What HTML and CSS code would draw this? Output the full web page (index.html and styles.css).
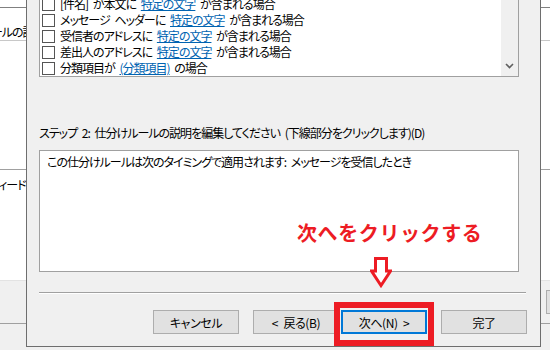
FILE: index.html
```html
<!DOCTYPE html>
<html lang="ja">
  <head>
    <meta charset="UTF-8" />
    <meta name="viewport" content="width=device-width, initial-scale=1.0" />
    <title>仕分けルール ウィザード</title>
    <link rel="stylesheet" href="styles.css">
  </head>
  <body>
    <div class="backdrop">
      <div class="bg-pane">
        <div class="bg-rule dark"></div>
        <div class="bg-text top">ールの説明</div>
        <div class="bg-rule light"></div>
        <div class="bg-spacer"></div>
        <div class="bg-rule"></div>
        <div class="bg-text">ィードが</div>
      </div>
      <div class="bg-foot">
        <div class="bg-button"></div>
        <div class="bg-rule foot-rule"></div>
      </div>
    </div>

    <div class="dialog">
      <div class="listbox">
        <ul class="conditions">
          <li><span class="check"></span>[件名] が本文に <a class="link">特定の文字</a> が含まれる場合</li>
          <li><span class="check"></span>メッセージ ヘッダーに <a class="link">特定の文字</a> が含まれる場合</li>
          <li><span class="check"></span>受信者のアドレスに <a class="link">特定の文字</a> が含まれる場合</li>
          <li><span class="check"></span>差出人のアドレスに <a class="link">特定の文字</a> が含まれる場合</li>
          <li><span class="check"></span>分類項目が <a class="link">(分類項目)</a> の場合</li>
        </ul>
        <div class="scrollbar">
          <svg class="chevron" width="9" height="6" viewBox="0 0 9 6">
            <path d="M1 1 L4.5 4.5 L8 1" fill="none" stroke="#606060" stroke-width="1.6" />
          </svg>
        </div>
      </div>

      <div class="step-label">ステップ 2: 仕分けルールの説明を編集してください (下線部分をクリックします)(D)</div>
      <div class="desc-box">この仕分けルールは次のタイミングで適用されます: メッセージを受信したとき</div>

      <div class="separator"></div>

      <div class="buttons">
        <button class="btn cancel">キャンセル</button>
        <button class="btn back">&lt; 戻る(B)</button>
        <span class="highlight"><button class="btn primary">次へ(N) &gt;</button></span>
        <button class="btn finish">完了</button>
      </div>
    </div>

    <div class="callout">次へをクリックする</div>
    <svg class="callout-arrow" width="22" height="31" viewBox="0 0 22 31">
      <path d="M5.5 1.5 H16.5 V14 H20.5 L11 28.5 L1.5 14 H5.5 Z" fill="#fff" stroke="#ed1c24" stroke-width="3" stroke-linejoin="miter" />
    </svg>
  </body>
</html>
```

FILE: styles.css
```css
body {
  margin: 0;
  padding: 0;
  width: 550px;
  height: 350px;
  overflow: hidden;
  position: relative;
  background: #fff;
  font-family: "Noto Sans CJK JP", "Noto Sans", sans-serif;
  font-size: 12px;
  font-feature-settings: "palt";
  letter-spacing: -1px;
  word-spacing: 3px;
  color: #000;
}

/* window behind the dialog */
.backdrop {
  display: flex;
  flex-direction: column;
  height: 350px;
}

.bg-pane {
  height: 280px;
  background: #fff;
}

.bg-rule {
  height: 1px;
  background: #a0a0a0;
}

.bg-rule.dark {
  margin-top: 7px;
  background: #808080;
}

.bg-rule.light {
  background: #c8c8c8;
}

.bg-text {
  height: 16px;
  line-height: 16px;
  white-space: nowrap;
}

.bg-text.top {
  margin-top: 16px;
  margin-left: -9px;
}

.bg-text:not(.top) {
  margin-top: 7px;
  margin-left: -2px;
}

.bg-spacer {
  height: 128px;
}

.bg-foot {
  flex: 1;
  background: #f0f0f0;
  border-top: 1px solid #e3e3e3;
  display: flex;
  flex-direction: column;
}

.bg-button {
  align-self: flex-end;
  width: 3px;
  height: 22px;
  margin-top: 9px;
  background: #e1e1e1;
  border-left: 1px solid #adadad;
  border-top: 1px solid #adadad;
  border-bottom: 1px solid #adadad;
}

.foot-rule {
  margin-top: 9px;
}

/* the dialog window */
.dialog {
  position: absolute;
  left: 26px;
  top: -40px;
  width: 515px;
  height: 387px;
  box-sizing: border-box;
  background: #f0f0f0;
  border: 1px solid #6e6e6e;
  padding: 0 14px 0 12px;
}

.listbox {
  display: flex;
  margin-top: 33px;
  width: 480px;
  box-sizing: border-box;
  background: #fff;
  border: 1px solid #a0a0a0;
}

.conditions {
  flex: 1;
  list-style: none;
  margin: 0;
  padding: 1px 0 0;
}

.conditions li {
  display: flex;
  align-items: center;
  height: 16px;
  line-height: 16px;
  white-space: pre;
}

.check {
  width: 11px;
  height: 11px;
  margin: 0 5px 0 2px;
  border: 1px solid #555;
  background: #fff;
  flex-shrink: 0;
}

.link {
  color: #0063b1;
  text-decoration: underline;
}

.scrollbar {
  width: 17px;
  background: #f0f0f0;
  display: flex;
  align-items: flex-end;
  justify-content: center;
  padding-bottom: 7px;
  box-sizing: border-box;
}

.step-label {
  margin-top: 48px;
  height: 16px;
  line-height: 16px;
  white-space: nowrap;
}

.desc-box {
  margin-top: 9px;
  width: 480px;
  height: 122px;
  box-sizing: border-box;
  background: #fff;
  border: 1px solid #a0a0a0;
  padding: 3px 7px;
  line-height: 16px;
}

.separator {
  margin-top: 20px;
  border-top: 1px solid #a0a0a0;
  border-bottom: 1px solid #fff;
}

.buttons {
  display: flex;
  justify-content: flex-end;
  margin-top: 16px;
  margin-right: -1px;
}

.btn {
  width: 86px;
  height: 24px;
  padding: 0;
  box-sizing: border-box;
  background: #e1e1e1;
  border: 1px solid #adadad;
  font-family: inherit;
  font-size: 12px;
  font-feature-settings: "palt";
  letter-spacing: -0.4px;
  word-spacing: 3px;
  color: #000;
}

.back {
  margin-left: 14px;
}

.highlight {
  position: relative;
  display: inline-flex;
  margin-left: 2px;
}

.highlight::after {
  content: "";
  position: absolute;
  left: -7px;
  right: -7px;
  top: -8px;
  bottom: -12px;
  border: 6px solid #ed1c24;
}

.primary {
  border: 2px solid #0078d7;
}

.finish {
  margin-left: 14px;
}

/* annotation */
.callout {
  position: absolute;
  left: 297px;
  top: 221px;
  line-height: 24px;
  font-size: 20px;
  font-weight: bold;
  font-feature-settings: normal;
  letter-spacing: 0.6px;
  word-spacing: 0;
  color: #ed1c24;
  white-space: nowrap;
}

.callout-arrow {
  position: absolute;
  left: 370px;
  top: 257px;
}
```
